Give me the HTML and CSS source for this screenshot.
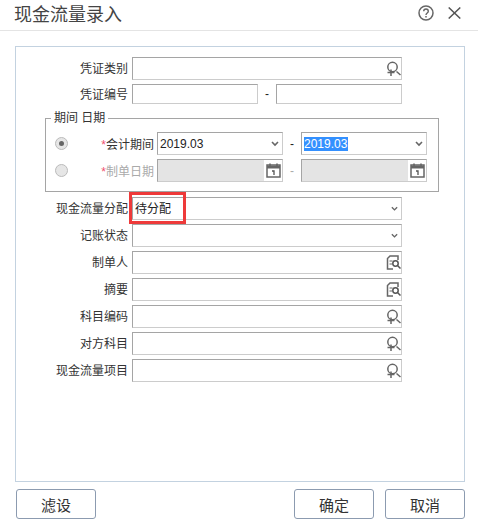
FILE: index.html
```html
<!DOCTYPE html>
<html lang="zh-CN">
<head>
    <meta charset="UTF-8">
    <meta name="viewport" content="width=device-width, initial-scale=1.0">
    <title>现金流量录入</title>
    <link rel="stylesheet" href="styles.css">
</head>
<body>

    <!-- 图标 -->
    <svg class="icon-defs" aria-hidden="true">
        <symbol id="i-ref" viewBox="0 0 15 15">
            <circle cx="6.5" cy="6" r="4.7" fill="none" stroke="#666" stroke-width="1.5"/>
            <path d="M5 8.5v6.5M1.5 11.5h7M10.5 10.5l4 3.5" fill="none" stroke="#666" stroke-width="1.5"/>
        </symbol>
        <symbol id="i-book" viewBox="0 0 15 15">
            <path d="M7 14H1.5V3.5L4 1h8v4" fill="none" stroke="#666" stroke-width="1.5"/>
            <path d="M3.5 6h3M3.5 9h2.5" stroke="#666" stroke-width="1"/>
            <circle cx="9.5" cy="8.5" r="2.7" fill="none" stroke="#555" stroke-width="1.5"/>
            <path d="M11.5 10.5l3 3" stroke="#555" stroke-width="1.5"/>
        </symbol>
        <symbol id="i-cal" viewBox="0 0 15 15">
            <rect x="1" y="2" width="13" height="12" fill="#fff" stroke="#666" stroke-width="1.5"/>
            <path d="M1 2.5h13V5.5H1z" fill="#666"/>
            <path d="M4 0.5v3M11 0.5v3" stroke="#666" stroke-width="1.6"/>
            <path d="M6 8h2v4" fill="none" stroke="#555" stroke-width="1.3"/>
        </symbol>
        <symbol id="i-down" viewBox="0 0 8 6">
            <path d="M1 1l3 3 3-3" fill="none" stroke="#666" stroke-width="1.6"/>
        </symbol>
    </svg>

    <!-- 标题栏 -->
    <div class="header">
        <h1>现金流量录入</h1>
        <div class="header-tools">
            <svg class="tool-help" viewBox="0 0 16 16">
                <circle cx="8" cy="8" r="7" fill="none" stroke="#666" stroke-width="1.5"/>
                <path d="M5.7 6.3c0-3 4.6-3 4.6 0 0 1.7-2.3 1.7-2.3 3.6" fill="none" stroke="#666" stroke-width="1.4"/>
                <path d="M8 11v1.6" stroke="#666" stroke-width="1.5"/>
            </svg>
            <svg class="tool-close" viewBox="0 0 13 12">
                <path d="M0.7 0.5l11.6 11M12.3 0.5l-11.6 11" fill="none" stroke="#555" stroke-width="1.5"/>
            </svg>
        </div>
    </div>

    <!-- 表单区域 -->
    <div class="panel">
        <div class="row">
            <label class="row-label">凭证类别</label>
            <div class="field wide"><svg class="ico"><use href="#i-ref"/></svg></div>
        </div>
        <div class="row">
            <label class="row-label">凭证编号</label>
            <div class="field half short"></div>
            <span class="dash">-</span>
            <div class="field half short"></div>
        </div>

        <fieldset class="period">
            <legend>期间 日期</legend>
            <div class="period-row">
                <span class="radio checked"></span>
                <label class="period-label"><i>*</i>会计期间</label>
                <div class="field half"><span class="value">2019.03</span><svg class="ico-down"><use href="#i-down"/></svg></div>
                <span class="dash">-</span>
                <div class="field half"><span class="value selected">2019.03</span><svg class="ico-down"><use href="#i-down"/></svg></div>
            </div>
            <div class="period-row off">
                <span class="radio"></span>
                <label class="period-label"><i>*</i>制单日期</label>
                <div class="field half disabled"><span class="cal-box"><svg class="ico-cal"><use href="#i-cal"/></svg></span></div>
                <span class="dash">-</span>
                <div class="field half disabled"><span class="cal-box"><svg class="ico-cal"><use href="#i-cal"/></svg></span></div>
            </div>
        </fieldset>

        <div class="row">
            <label class="row-label">现金流量分配</label>
            <div class="field wide"><span class="value">待分配</span><svg class="ico-down small"><use href="#i-down"/></svg>
                <div class="mark"></div>
            </div>
        </div>
        <div class="row">
            <label class="row-label">记账状态</label>
            <div class="field wide"><svg class="ico-down small"><use href="#i-down"/></svg></div>
        </div>
        <div class="row">
            <label class="row-label">制单人</label>
            <div class="field wide"><svg class="ico"><use href="#i-book"/></svg></div>
        </div>
        <div class="row">
            <label class="row-label">摘要</label>
            <div class="field wide"><svg class="ico"><use href="#i-book"/></svg></div>
        </div>
        <div class="row">
            <label class="row-label">科目编码</label>
            <div class="field wide"><svg class="ico"><use href="#i-ref"/></svg></div>
        </div>
        <div class="row">
            <label class="row-label">对方科目</label>
            <div class="field wide"><svg class="ico"><use href="#i-ref"/></svg></div>
        </div>
        <div class="row">
            <label class="row-label">现金流量项目</label>
            <div class="field wide"><svg class="ico"><use href="#i-ref"/></svg></div>
        </div>
    </div>

    <!-- 底部按钮 -->
    <div class="footer">
        <button class="btn">滤设</button>
        <button class="btn push">确定</button>
        <button class="btn">取消</button>
    </div>

</body>
</html>
```

FILE: styles.css
```css
body {
    margin: 0;
    width: 478px;
    height: 532px;
    overflow: hidden;
    background-color: #fff;
    color: #333;
    font-family: "Liberation Sans", "Noto Sans CJK SC", sans-serif;
    font-size: 12px;
}

.icon-defs {
    display: none;
}

/* 标题栏 */
.header {
    height: 30px;
    border-bottom: 1px solid #e4e4e4;
    display: flex;
    align-items: center;
    justify-content: space-between;
    padding: 0 17px 0 14px;
}

.header h1 {
    margin: 0 0 4px;
    font-size: 18px;
    font-weight: normal;
    color: #444;
}

.header-tools {
    display: flex;
    align-items: center;
    gap: 14px;
    margin-bottom: 5px;
}

.tool-help {
    width: 16px;
    height: 16px;
}

.tool-close {
    width: 13px;
    height: 12px;
}

/* 表单区域 */
.panel {
    margin: 15px 13px 0 15px;
    height: 424px;
    border: 1px solid #c3d2e0;
    padding-top: 10px;
    display: flex;
    flex-direction: column;
    gap: 4px;
}

.row {
    display: flex;
    align-items: center;
}

.row-label {
    width: 112px;
    margin-right: 4px;
    margin-bottom: 2px;
    text-align: right;
    white-space: nowrap;
}

.field {
    box-sizing: border-box;
    height: 23px;
    border: 1px solid #ccc;
    border-top-color: #a5a5a5;
    border-left-color: #a5a5a5;
    background-color: #fff;
    position: relative;
    display: flex;
    align-items: center;
    justify-content: space-between;
    padding: 0 2px;
    color: #222;
}

.wide {
    width: 270px;
}

.half {
    width: 126px;
}

.short {
    height: 20px;
}

.dash {
    width: 18px;
    text-align: center;
    color: #222;
}

.value {
    line-height: 14px;
}

.selected {
    padding-right: 1px;
    background-color: #3390ff;
    color: #fff;
}

.ico {
    width: 15px;
    height: 15px;
    margin-left: auto;
    margin-right: -2px;
}

.ico-down {
    width: 8px;
    height: 6px;
    margin-left: auto;
    margin-right: 1px;
}

.ico-down.small {
    width: 7px;
}

/* 期间 日期 */
.period {
    margin: 3px 0 1px 29px;
    width: 394px;
    box-sizing: border-box;
    padding: 6px 11px 9px 9px;
    border: 1px solid #a5a5a5;
    display: flex;
    flex-direction: column;
    gap: 4px;
}

.period legend {
    padding: 0 3px;
    margin-left: -4px;
    line-height: 15px;
    color: #333;
}

.period-row {
    display: flex;
    align-items: center;
}

.radio {
    box-sizing: border-box;
    width: 13px;
    height: 13px;
    border: 1px solid #bbb;
    border-radius: 50%;
    background-color: #e6e6e6;
    display: flex;
    align-items: center;
    justify-content: center;
}

.radio.checked::after {
    content: "";
    width: 5px;
    height: 5px;
    border-radius: 50%;
    background-color: #666;
}

.period-label {
    width: 86px;
    margin-right: 3px;
    margin-bottom: 1px;
    text-align: right;
    white-space: nowrap;
}

.period-label i {
    font-style: normal;
    color: #f0506e;
}

.off .period-label {
    color: #aaa;
}

.off .dash {
    color: #aaa;
}

.disabled {
    background-color: #e4e4e4;
    padding: 0;
}

.cal-box {
    margin-left: auto;
    width: 18px;
    height: 21px;
    background-color: #fff;
    display: flex;
    align-items: center;
    justify-content: center;
}

.ico-cal {
    width: 15px;
    height: 15px;
}

/* 红色标记框 */
.mark {
    position: absolute;
    left: -4px;
    top: -6px;
    width: 51px;
    height: 26px;
    border: 3px solid #ee3a3a;
}

/* 底部按钮 */
.footer {
    display: flex;
    gap: 11px;
    margin: 7px 13px 0 16px;
}

.btn {
    width: 80px;
    height: 30px;
    padding: 0;
    border: 1px solid #8c9bb0;
    border-radius: 3px;
    background-color: #fff;
    color: #333;
    font-family: inherit;
    font-size: 15px;
}

.push {
    margin-left: auto;
}
```
